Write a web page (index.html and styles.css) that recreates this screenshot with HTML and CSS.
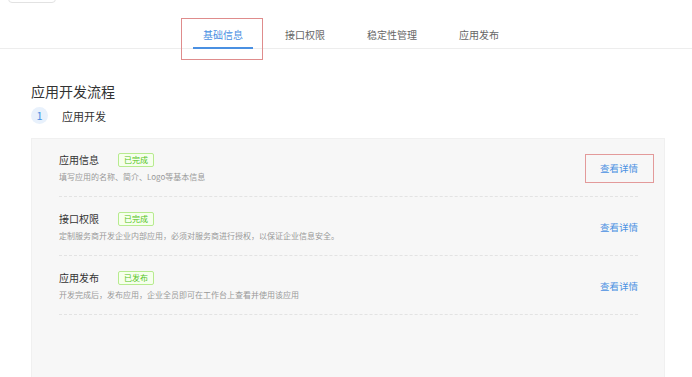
FILE: index.html
```html
<!DOCTYPE html>
<html>
<head>
  <meta charset="utf-8">
  <link rel="stylesheet" href="styles.css">
</head>
<body>
  <div class="top">
    <div class="back-btn"></div>
  </div>

  <div class="tabs">
    <div class="tab active">基础信息</div>
    <div class="tab">接口权限</div>
    <div class="tab">稳定性管理</div>
    <div class="tab">应用发布</div>
  </div>

  <div class="main">
    <h2 class="title">应用开发流程</h2>
    <div class="step">
      <span class="step-num">1</span>
      <span class="step-text">应用开发</span>
    </div>

    <div class="panel">
      <div class="row">
        <div class="info">
          <div class="name">应用信息 <span class="badge">已完成</span></div>
          <div class="desc">填写应用的名称、简介、Logo等基本信息</div>
        </div>
        <a class="link marked">查看详情</a>
      </div>
      <div class="row">
        <div class="info">
          <div class="name">接口权限 <span class="badge">已完成</span></div>
          <div class="desc">定制服务商开发企业内部应用，必须对服务商进行授权，以保证企业信息安全。</div>
        </div>
        <a class="link">查看详情</a>
      </div>
      <div class="row">
        <div class="info">
          <div class="name">应用发布 <span class="badge">已发布</span></div>
          <div class="desc">开发完成后，发布应用，企业全员即可在工作台上查看并使用该应用</div>
        </div>
        <a class="link">查看详情</a>
      </div>
    </div>
  </div>
</body>
</html>
```

FILE: styles.css
```css
body {
  margin: 0;
  font-family: "Noto Sans CJK SC", "Noto Sans", sans-serif;
  color: #333;
  background: #fff;
}

/* cut off button at the very top */
.top {
  height: 3px;
  display: flex;
  align-items: flex-end;
  padding-left: 8px;
  overflow: hidden;
}

.back-btn {
  flex: none;
  width: 46px;
  height: 20px;
  border: 1px solid #e2e2e2;
  border-radius: 4px;
}

.tabs {
  display: flex;
  justify-content: center;
  gap: 22px;
  padding: 25px 0 0 10px;
  border-bottom: 1px solid #ededed;
}

.tab {
  position: relative;
  font-size: 10px;
  line-height: 14px;
  color: #666;
  padding: 0 10px 5px;
  border-bottom: 2px solid transparent;
  margin-bottom: -1px;
}

.tab.active {
  color: #4a90e2;
  border-bottom-color: #4a90e2;
}

.tab.active::after {
  content: "";
  position: absolute;
  left: -12px;
  right: -10px;
  top: -10px;
  bottom: -13px;
  border: 1px solid #df8c8c;
}

.main {
  padding: 32px 27px 0 31px;
}

.title {
  margin: 0;
  font-size: 14px;
  line-height: 20px;
  font-weight: normal;
  color: #333;
}

.step {
  display: flex;
  align-items: center;
  margin-top: 6px;
  height: 17px;
}

.step-num {
  width: 17px;
  height: 17px;
  border-radius: 50%;
  background: #e8f1fc;
  color: #4a90e2;
  font-size: 11px;
  line-height: 17px;
  text-align: center;
}

.step-text {
  margin-left: 14px;
  font-size: 11px;
  color: #333;
}

.panel {
  margin-top: 14px;
  min-height: 240px;
  background: #f7f7f7;
  border: 1px solid #f0f0f0;
  padding: 0 26px 0 27px;
}

.row {
  display: flex;
  align-items: center;
  justify-content: space-between;
  padding: 14px 0 14px;
  border-bottom: 1px dashed #e3e3e3;
}

.row + .row {
  padding-top: 15px;
}

.name {
  display: flex;
  align-items: center;
  gap: 19px;
  font-size: 10px;
  line-height: 14px;
  color: #333;
}

.badge {
  font-size: 8px;
  line-height: 12px;
  padding: 0 5px;
  color: #52c41a;
  background: #f6ffed;
  border: 1px solid #b7eb8f;
  border-radius: 2px;
}

.desc {
  margin-top: 5px;
  font-size: 8px;
  line-height: 10px;
  color: #999;
}

.link {
  position: relative;
  font-size: 9.5px;
  line-height: 14px;
  color: #4a90e2;
  cursor: pointer;
}

.link.marked::after {
  content: "";
  position: absolute;
  left: -15px;
  right: -16px;
  top: -7px;
  bottom: -8px;
  border: 1px solid #e39a9a;
}
```
